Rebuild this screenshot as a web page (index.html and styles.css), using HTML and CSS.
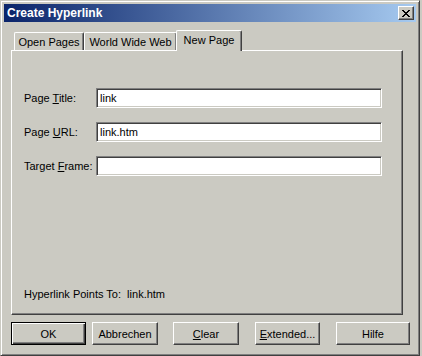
FILE: index.html
```html
<!DOCTYPE html>
<html>
<head>
<meta charset="utf-8">
<link rel="stylesheet" href="styles.css">
</head>
<body>
<div class="window">
  <div class="titlebar">
    <span class="title">Create Hyperlink</span>
    <span class="close"><svg width="8" height="7" viewBox="0 0 8 7"><path d="M0 0h2v1h1v1h2V1h1V0h2v1H7v1H6v1H5v1h1v1h1v1h1v1H6V6H5V5H3v1H2v1H0V6h1V5h1V4h1V3H2V2H1V1H0z" fill="#000"/></svg></span>
  </div>
  <div class="tabs">
    <div class="tab t1">Open Pages</div>
    <div class="tab t2">World Wide Web</div>
    <div class="tab t3 active">New Page</div>
  </div>
  <div class="panel">
    <div class="row">
      <label class="lbl">Page <u>T</u>itle:</label>
      <div class="field">link</div>
    </div>
    <div class="row">
      <label class="lbl">Page <u>U</u>RL:</label>
      <div class="field">link.htm</div>
    </div>
    <div class="row">
      <label class="lbl">Target <u>F</u>rame:</label>
      <div class="field"></div>
    </div>
    <div class="points">Hyperlink Points To:&nbsp; link.htm</div>
  </div>
  <div class="buttons">
    <div class="btn default"><span>OK</span></div>
    <div class="btn b2"><span>Abbrechen</span></div>
    <div class="btn b3"><span><u>C</u>lear</span></div>
    <div class="btn b4"><span><u>E</u>xtended...</span></div>
    <div class="btn b5"><span>Hilfe</span></div>
  </div>
</div>
</body>
</html>
```
FILE: styles.css
```css
html, body {
  margin: 0;
  padding: 0;
  background: #cbcac2;
}
body {
  font-family: "Liberation Sans", Arial, sans-serif;
  font-size: 11px;
  color: #000;
}
.window {
  width: 420px;
  height: 356px;
  box-sizing: border-box;
  border: 1px solid;
  border-color: #cbcac2 #404040 #404040 #cbcac2;
  box-shadow: inset 1px 1px #fff, inset -1px -1px #808080;
  padding: 3px;
  background: #cbcac2;
}
.titlebar {
  height: 18px;
  background: linear-gradient(to right, #0a246a, #a6caf0);
  display: flex;
  align-items: center;
  justify-content: space-between;
  padding: 0 2px 0 3px;
}
.title {
  color: #fff;
  font-weight: bold;
  font-size: 12px;
}
.close {
  width: 16px;
  height: 14px;
  box-sizing: border-box;
  background: #cbcac2;
  border: 1px solid;
  border-color: #fff #404040 #404040 #fff;
  box-shadow: inset -1px -1px #808080;
  display: flex;
  align-items: center;
  justify-content: center;
}
.close svg { display: block; margin-left: -1px; }
.tabs {
  display: flex;
  align-items: flex-end;
  height: 20px;
  margin: 8px 0 0 7px;
  padding-left: 3px;
  position: relative;
  z-index: 1;
}
.tab {
  height: 18px;
  box-sizing: border-box;
  border-left: 1px solid #fff;
  border-top: 1px solid #fff;
  border-right: 1px solid #404040;
  box-shadow: inset -1px 0 #808080;
  border-radius: 2px 2px 0 0;
  display: flex;
  align-items: center;
  justify-content: center;
  font-size: 11px;
  background: #cbcac2;
}
.t1 { width: 70px; }
.t2 { width: 93px; }
.t3 { width: 66px; }
.tab.active {
  height: 21px;
  margin-left: -1px;
  margin-bottom: -1px;
  padding-bottom: 2px;
}
.panel {
  width: 392px;
  height: 265px;
  box-sizing: border-box;
  margin-left: 7px;
  border: 1px solid;
  border-color: #fff #404040 #404040 #fff;
  box-shadow: inset -1px -1px #808080;
  padding: 37px 0 0 12px;
  display: flex;
  flex-direction: column;
  gap: 14px;
}
.row {
  display: flex;
  align-items: center;
  height: 20px;
}
.lbl {
  width: 72px;
}
.field {
  width: 286px;
  height: 20px;
  box-sizing: border-box;
  background: #fff;
  border: 1px solid;
  border-color: #808080 #fff #fff #808080;
  box-shadow: inset 1px 1px #404040, inset -1px -1px #cbcac2;
  padding: 0 3px;
  display: flex;
  align-items: center;
  font-size: 11px;
}
.points {
  margin-top: auto;
  margin-bottom: 14px;
}
.buttons {
  display: flex;
  margin: 7px 0 0 7px;
  height: 23px;
}
.btn {
  height: 23px;
  box-sizing: border-box;
  border: 1px solid;
  border-color: #fff #404040 #404040 #fff;
  box-shadow: inset -1px -1px #808080;
  display: flex;
  align-items: center;
  justify-content: center;
  font-size: 11px;
}
.btn.default {
  width: 75px;
  border: 1px solid #000;
  box-shadow: inset 1px 1px #fff, inset -1px -1px #404040, inset -2px -2px #808080;
}
.b2 { width: 66px; margin-left: 6px; }
.b3 { width: 66px; margin-left: 15px; }
.b4 { width: 65px; margin-left: 16px; }
.b5 { width: 74px; margin-left: 16px; }
```
